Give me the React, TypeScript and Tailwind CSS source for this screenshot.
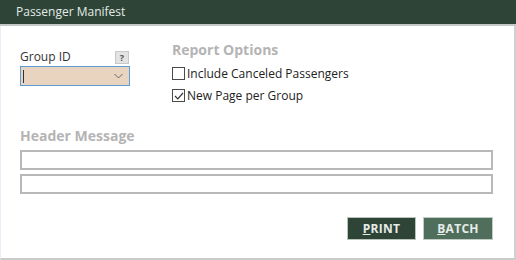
import { useState } from 'react'

const font = { fontFamily: '"Open Sans", "Noto Sans", sans-serif' }

export default function App() {
  const [cancelled, setCancelled] = useState(false)
  const [perGroup, setPerGroup] = useState(true)

  return (
    <div className="w-[516px] h-[260px] bg-white flex flex-col overflow-hidden" style={font}>
      {/* title bar */}
      <div className="h-[26px] bg-[#2e4437] border-b-2 border-[#c4c8c6] flex items-center pl-[16px] text-[12px] text-[#e4eae6]">
        Passenger Manifest
      </div>

      <div className="flex-1 flex border-l border-[#e8eff8] border-r-2 border-r-[#cfd1d0] border-b-2 border-b-[#c9cbca]">
        <div className="flex-1 flex flex-col pl-[19px] pr-[21px]">
          <div className="flex pt-[15px]">
            {/* group id */}
            <div className="w-[110px] pt-[9px]">
              <div className="flex items-center justify-between h-[14px]">
                <span className="text-[12px] text-[#333] leading-none">Group ID</span>
                <span className="w-[14px] h-[13px] bg-[#e3e3e3] border border-[#c8c8c8] text-[9px] font-bold text-[#555] flex items-center justify-center leading-none mr-[1px]">?</span>
              </div>
              <div className="mt-[2px] h-[20px] bg-[#e8d4bf] border border-[#5b9bd8] flex items-center justify-between pl-[2px] pr-[6px]">
                <span className="w-px h-[13px] bg-[#333]" />
                <svg width="9" height="6" viewBox="0 0 9 6" fill="none" stroke="#6b6b6b" strokeWidth="1">
                  <path d="M0.5 1 L4.5 5 L8.5 1" />
                </svg>
              </div>
            </div>

            {/* report options */}
            <div className="ml-[42px] flex flex-col pt-[2px]">
              <div className="text-[14px] font-bold text-[#b4b4b4] leading-none">Report Options</div>
              <label className="flex items-center gap-[2px] mt-[10px] text-[12px] text-[#222] leading-none cursor-pointer">
                <span
                  onClick={() => setCancelled(!cancelled)}
                  className="w-[13px] h-[13px] border border-[#4a4a4a] bg-white flex items-center justify-center"
                >
                  {cancelled && (
                    <svg width="10" height="8" viewBox="0 0 10 8" fill="none" stroke="#333" strokeWidth="1.2">
                      <path d="M1 4 L3.8 6.8 L9 1" />
                    </svg>
                  )}
                </span>
                Include Canceled Passengers
              </label>
              <label className="flex items-center gap-[2px] mt-[9px] text-[12px] text-[#222] leading-none cursor-pointer">
                <span
                  onClick={() => setPerGroup(!perGroup)}
                  className="w-[13px] h-[13px] border border-[#4a4a4a] bg-white flex items-center justify-center"
                >
                  {perGroup && (
                    <svg width="10" height="8" viewBox="0 0 10 8" fill="none" stroke="#333" strokeWidth="1.2">
                      <path d="M1 4 L3.8 6.8 L9 1" />
                    </svg>
                  )}
                </span>
                New Page per Group
              </label>
            </div>
          </div>

          {/* header message */}
          <div className="mt-[27px] text-[14px] font-bold text-[#b4b4b4] leading-none">Header Message</div>
          <input className="mt-[7px] h-[20px] border-2 border-[#b8b8b8] outline-none" />
          <input className="mt-[4px] h-[20px] border-2 border-[#b8b8b8] outline-none" />

          <div className="flex justify-end gap-[7px] mt-[23px]">
            <button className="w-[69px] h-[23px] bg-[#2e4437] border border-[#b9c2bc] text-[12px] font-bold text-[#e6ece8] tracking-wide">
              <span className="underline">P</span>RINT
            </button>
            <button className="w-[70px] h-[23px] bg-[#4f6e5c] border border-[#c2cbc5] text-[12px] font-bold text-[#e6ece8] tracking-wide">
              <span className="underline">B</span>ATCH
            </button>
          </div>
        </div>
      </div>
    </div>
  )
}
